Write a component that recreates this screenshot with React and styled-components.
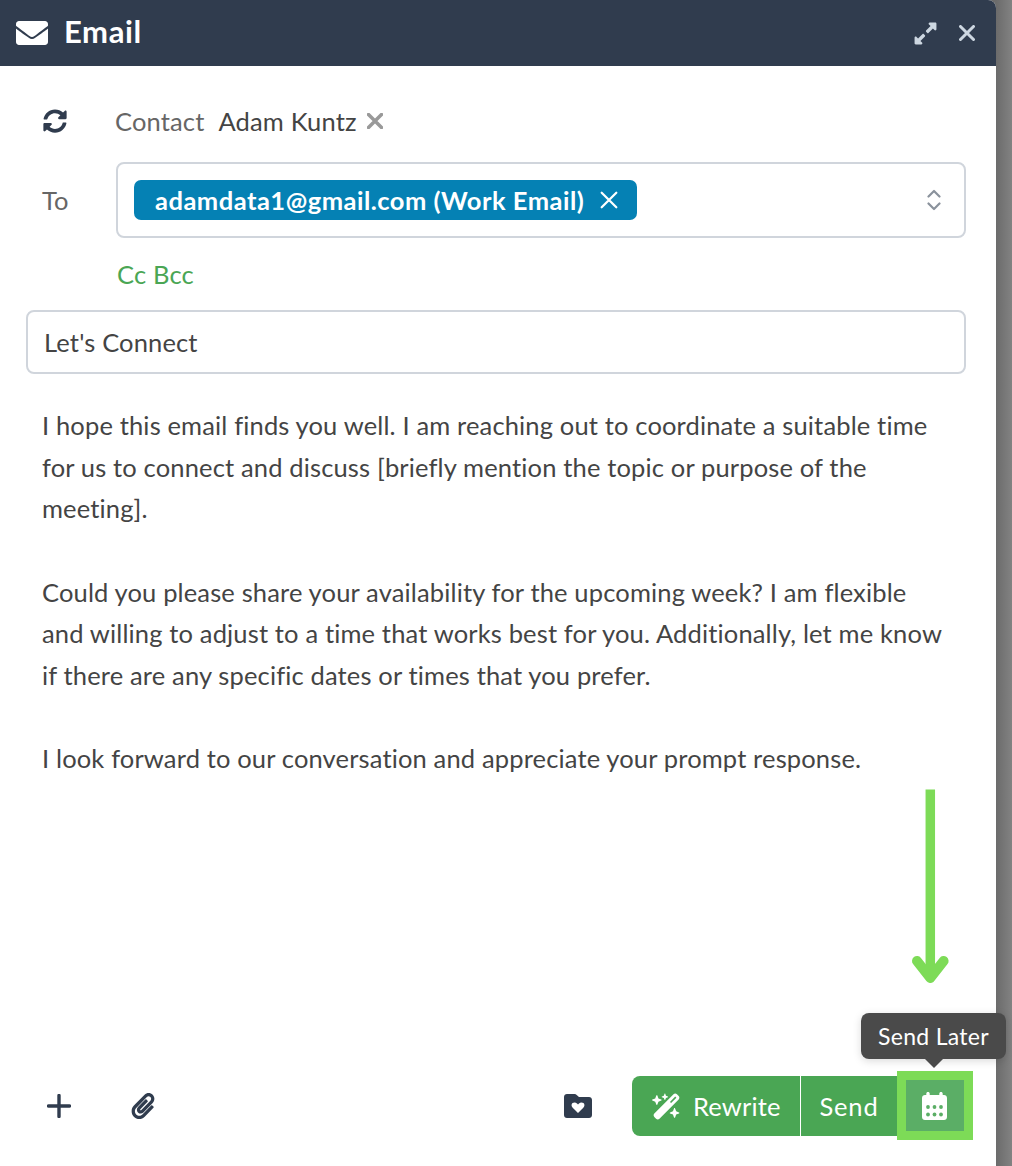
import React from 'react'
import styled, { createGlobalStyle } from 'styled-components'
import { FaEnvelope, FaSyncAlt, FaExpandAlt, FaPaperclip } from 'react-icons/fa'
import { FaWandMagicSparkles } from 'react-icons/fa6'

const GlobalStyle = createGlobalStyle`
    html, body {
        margin: 0;
        padding: 0;
        height: 1166px;
        overflow: hidden;
        font-family: "Lato", "Liberation Sans", sans-serif;
        font-variant-ligatures: none;
    }
    * { box-sizing: border-box; }
`;
const Page = styled.div`
    position: relative;
    display: flex;
    width: 1012px;
    height: 1166px;
    background: linear-gradient(90deg, #6b6b6b 996px, #828282 1012px);
    overflow: hidden;
`;
const Panel = styled.div`
    width: 996px;
    height: 1166px;
    background: white;
    display: flex;
    flex-direction: column;
    border-top-right-radius: 8px;
    overflow: hidden;
`;
const Header = styled.div`
    height: 66px;
    flex: none;
    background: #303c4e;
    color: white;
    display: flex;
    align-items: center;
    padding: 0 21px 0 16px;
`;
const Title = styled.div`
    flex: 1;
    font-size: 31px;
    font-weight: 700;
    letter-spacing: 0.6px;
    margin: -5px 0 0 16px;
`;
const HeaderTool = styled.div`
    display: flex;
    color: #cdd7e1;
    margin-left: ${props => props.$gap || 0}px;
`;
const Body = styled.div`
    flex: 1;
    display: flex;
    flex-direction: column;
    padding: 0 30px 0 26px;
    color: #444;
    font-size: 25.5px;
    letter-spacing: 0.15px;
`;
const ContactRow = styled.div`
    display: flex;
    align-items: center;
    height: 40px;
    margin-top: 35px;
    padding-left: 17px;
    color: #303c4e;
`;
const ContactLabel = styled.span`
    color: #666;
    margin-left: 48px;
`;
const ContactName = styled.span`
    color: #444;
    margin-left: 14px;
`;
const RemoveContact = styled.span`
    display: flex;
    color: #999;
    margin-left: 10px;
`;
const ToRow = styled.div`
    display: flex;
    align-items: center;
    margin-top: 21px;
`;
const ToLabel = styled.div`
    width: 90px;
    padding-left: 16px;
    color: #666;
`;
const ToField = styled.div`
    flex: 1;
    height: 76px;
    border: 2px solid #d0d5dc;
    border-radius: 8px;
    display: flex;
    align-items: center;
    justify-content: space-between;
    padding: 0 23px 0 16px;
`;
const Chip = styled.div`
    height: 40px;
    width: 503px;
    border-radius: 7px;
    background: #0581b4;
    color: white;
    font-weight: 700;
    letter-spacing: 0.5px;
    display: flex;
    align-items: center;
    justify-content: space-between;
    padding: 0 19px 0 21px;
`;
const CcLink = styled.div`
    color: #4aa654;
    margin: 21px 0 0 91px;
    height: 30px;
    line-height: 30px;
`;
const SubjectBox = styled.div`
    height: 64px;
    margin-top: 21px;
    border: 2px solid #d0d5dc;
    border-radius: 8px;
    display: flex;
    align-items: center;
    padding-left: 16px;
`;
const Message = styled.div`
    margin-top: 31px;
    padding-left: 16px;
    line-height: 41.67px;
    flex: 1;
`;
const Footer = styled.div`
    display: flex;
    align-items: center;
    height: 60px;
    margin: 0 -7px 30px 21px;
    color: #303c4e;
`;
const FooterIcon = styled.div`
    display: flex;
    margin-right: ${props => props.$right || 0}px;
`;
const Spacer = styled.div`
    flex: 1;
`;
const ButtonGroup = styled.div`
    display: flex;
    height: 60px;
    color: white;
`;
const RewriteButton = styled.div`
    width: 169px;
    background: #4aa654;
    display: flex;
    align-items: center;
    gap: 12px;
    padding-left: 20px;
    border-right: 1px solid white;
    border-radius: 8px 0 0 8px;
`;
const SendButton = styled.div`
    width: 96px;
    background: #4aa654;
    display: flex;
    align-items: center;
    justify-content: center;
    letter-spacing: 0.8px;
`;
const LaterButton = styled.div`
    width: 76px;
    height: 69px;
    margin-top: -5px;
    padding-right: 2px;
    background: #5bae66;
    border: 9px solid #7ddb57;
    display: flex;
    align-items: center;
    justify-content: center;
`;
const Tooltip = styled.div`
    position: absolute;
    left: 861px;
    top: 1013px;
    width: 145px;
    height: 46px;
    border-radius: 8px;
    background: #4a4a4a;
    color: white;
    font-size: 23px;
    letter-spacing: 0.3px;
    display: flex;
    align-items: center;
    justify-content: center;
    box-shadow: 0 2px 8px rgba(0, 0, 0, 0.15);
    &::after {
        content: '';
        position: absolute;
        left: 64px;
        top: 46px;
        border: 9px solid transparent;
        border-top-color: #4a4a4a;
        border-bottom: none;
    }
`;
const ArrowMark = styled.svg`
    position: absolute;
    left: 905px;
    top: 785px;
`;

const CloseIcon = ({ size, weight }) => (
    <svg width={size} height={size} viewBox="0 0 16 16" fill="none" stroke="currentColor" strokeWidth={weight} strokeLinecap="round">
        <path d="M1.500 1.500l13 13M14.500 1.500l-13 13" />
    </svg>
)
const FolderHeart = () => (
    <svg width="28" height="24" viewBox="0 0 28 24">
        <path fill="#303c4e" d="M3 0h7.5c1 0 1.6.4 2.2 1L15 3h10c1.7 0 3 1.3 3 3v15c0 1.7-1.3 3-3 3H3c-1.700 0-3-1.300-3-3V3c0-1.700 1.300-3 3-3z" />
        <path fill="white" d="M14 19l-5.300-5.200c-1.500-1.500-1.500-3.600-.2-4.700 1.300-1.100 3.300-.9 4.500.3l1 1 1-1c1.200-1.200 3.200-1.400 4.500-.3 1.300 1.100 1.300 3.200-.2 4.700z" />
    </svg>
)
const PlusIcon = () => (
    <svg width="24" height="24" viewBox="0 0 24 24" fill="none" stroke="#303c4e" strokeWidth="3.400" strokeLinecap="round">
        <path d="M12 1.500v21M1.500 12h21" />
    </svg>
)
const UpDownIcon = () => (
    <svg width="14" height="22" viewBox="0 0 14 22" fill="none" stroke="#8a929c" strokeWidth="2.200" strokeLinecap="round" strokeLinejoin="round">
        <path d="M1.500 7.500l5.500-5.500 5.500 5.500M1.500 14.500l5.500 5.500 5.500-5.500" />
    </svg>
)
const CalendarIcon = () => (
    <svg width="25" height="28" viewBox="0 0 25 28">
        <path fill="white" d="M6 0c1 0 1.700.7 1.700 1.700V3h9.600V1.700C17.300.7 18 0 19 0s1.700.7 1.700 1.700V3H22c1.700 0 3 1.300 3 3v19c0 1.700-1.300 3-3 3H3c-1.700 0-3-1.300-3-3V6c0-1.700 1.300-3 3-3h1.300V1.700C4.300.7 5 0 6 0z" />
        <g fill="#5bae66">
            <circle cx="6" cy="15" r="1.900" />
            <circle cx="12.500" cy="15" r="1.900" />
            <circle cx="19" cy="15" r="1.900" />
            <circle cx="6" cy="22.500" r="1.900" />
            <circle cx="12.500" cy="22.500" r="1.900" />
            <circle cx="19" cy="22.500" r="1.900" />
        </g>
    </svg>
)

const App = () => {
    return (
        <Page>
            <GlobalStyle />
            <Panel>
                <Header>
                    <FaEnvelope size={32} />
                    <Title>Email</Title>
                    <HeaderTool><FaExpandAlt size={25} /></HeaderTool>
                    <HeaderTool $gap={21}><CloseIcon size={16} weight={3} /></HeaderTool>
                </Header>
                <Body>
                    <ContactRow>
                        <FaSyncAlt size={24} />
                        <ContactLabel>Contact</ContactLabel>
                        <ContactName>Adam Kuntz</ContactName>
                        <RemoveContact><CloseIcon size={16} weight={3.5} /></RemoveContact>
                    </ContactRow>
                    <ToRow>
                        <ToLabel>To</ToLabel>
                        <ToField>
                            <Chip>
                                <span>adamdata1@gmail.com (Work Email)</span>
                                <CloseIcon size={18} weight={2} />
                            </Chip>
                            <UpDownIcon />
                        </ToField>
                    </ToRow>
                    <CcLink>Cc Bcc</CcLink>
                    <SubjectBox>Let's Connect</SubjectBox>
                    <Message>
                        I hope this email finds you well. I am reaching out to coordinate a suitable time<br />
                        for us to connect and discuss [briefly mention the topic or purpose of the<br />
                        meeting].<br />
                        <br />
                        Could you please share your availability for the upcoming week? I am flexible<br />
                        and willing to adjust to a time that works best for you. Additionally, let me know<br />
                        if there are any specific dates or times that you prefer.<br />
                        <br />
                        I look forward to our conversation and appreciate your prompt response.
                    </Message>
                    <Footer>
                        <FooterIcon $right={59}><PlusIcon /></FooterIcon>
                        <FooterIcon><FaPaperclip size={26} /></FooterIcon>
                        <Spacer />
                        <FooterIcon $right={40}><FolderHeart /></FooterIcon>
                        <ButtonGroup>
                            <RewriteButton><FaWandMagicSparkles size={29} />Rewrite</RewriteButton>
                            <SendButton>Send</SendButton>
                            <LaterButton><CalendarIcon /></LaterButton>
                        </ButtonGroup>
                    </Footer>
                </Body>
            </Panel>
            <Tooltip>Send Later</Tooltip>
            <ArrowMark width="50" height="205" viewBox="0 0 50 205" fill="none" stroke="#7ddb57" strokeLinejoin="round" strokeLinecap="round">
                <path strokeWidth="9.500" strokeLinecap="butt" d="M25.300 4.500V190" />
                <path strokeWidth="10" d="M12 176l13.300 17 13.300-17" />
            </ArrowMark>
        </Page>
    )
}

export default App
